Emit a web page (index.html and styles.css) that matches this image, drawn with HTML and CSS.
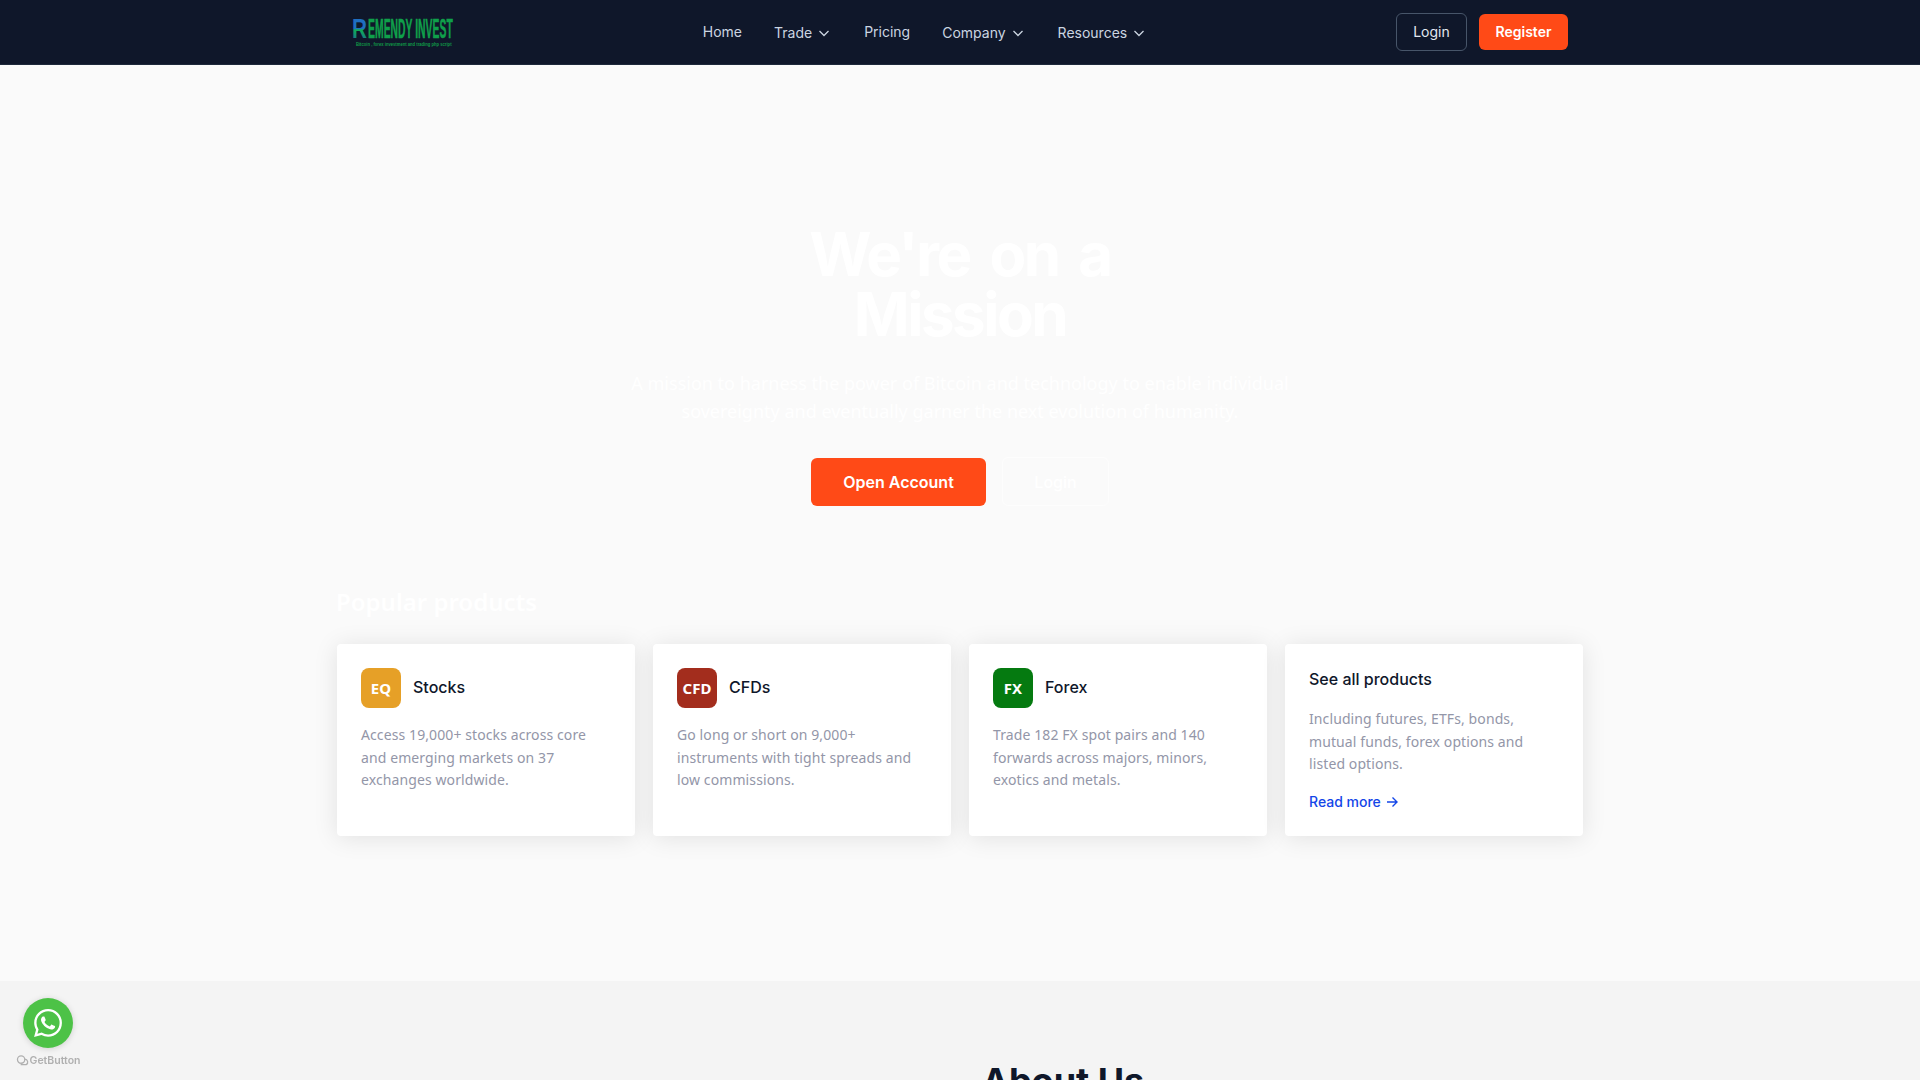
FILE: index.html
```html
<!DOCTYPE html>
<html lang="en">
<head>
<meta charset="UTF-8" />
<meta name="viewport" content="width=device-width, initial-scale=1" />
<title>Remendy Invest</title>
<link rel="stylesheet" href="styles.css">
</head>
<body>
<header class="topbar">
  <div class="wrap topbar-inner">
    <a class="logo" href="#" aria-label="Remendy Invest">
      <svg width="102" height="40" viewBox="0 0 102 40">
        <defs>
          <linearGradient id="logoR" x1="0" y1="0" x2="0" y2="1">
            <stop offset="0" stop-color="#1f6fc0" />
            <stop offset="0.5" stop-color="#1f6fc0" />
            <stop offset="0.55" stop-color="#0fae55" />
            <stop offset="1" stop-color="#1b5f9e" />
          </linearGradient>
        </defs>
        <g transform="scale(0.75 1)">
          <text class="logo-r" x="0" y="26" textLength="20" lengthAdjust="spacingAndGlyphs" fill="url(#logoR)">R</text>
        </g>
        <g transform="scale(0.46 1)">
          <text class="logo-name" x="35" y="26" textLength="184" lengthAdjust="spacingAndGlyphs">EMENDY INVEST</text>
        </g>
        <g transform="scale(0.79 1)">
          <text class="logo-sub" x="5" y="34" textLength="121" lengthAdjust="spacingAndGlyphs">Bitcoin , forex investment and trading php script</text>
        </g>
      </svg>
    </a>
    <nav class="mainnav">
      <a href="#">Home</a>
      <a class="has-menu" href="#">Trade
        <svg viewBox="0 0 16 16"><path d="M3.5 6l4.5 4.5L12.5 6" /></svg>
      </a>
      <a href="#">Pricing</a>
      <a class="has-menu" href="#">Company
        <svg viewBox="0 0 16 16"><path d="M3.5 6l4.5 4.5L12.5 6" /></svg>
      </a>
      <a class="has-menu" href="#">Resources
        <svg viewBox="0 0 16 16"><path d="M3.5 6l4.5 4.5L12.5 6" /></svg>
      </a>
    </nav>
    <div class="topbar-actions">
      <a class="btn-login" href="#">Login</a>
      <a class="btn-register" href="#">Register</a>
    </div>
  </div>
</header>

<main>
  <section class="hero">
    <h1>We're on a<br>Mission</h1>
    <p class="hero-text">A mission to harness the power of Bitcoin and technology to enable individual sovereignty and eventually garner the next evolution of humanity.</p>
    <div class="hero-actions">
      <a class="btn-open" href="#">Open Account</a>
      <a class="btn-ghost" href="#">Login</a>
    </div>
  </section>

  <section class="products wrap">
    <h2>Popular products</h2>
    <div class="product-grid">
      <div class="card">
        <div class="card-head">
          <span class="badge badge-eq">EQ</span>
          <h3>Stocks</h3>
        </div>
        <p>Access 19,000+ stocks across core and emerging markets on 37 exchanges worldwide.</p>
      </div>
      <div class="card">
        <div class="card-head">
          <span class="badge badge-cfd">CFD</span>
          <h3>CFDs</h3>
        </div>
        <p>Go long or short on 9,000+ instruments with tight spreads and low commissions.</p>
      </div>
      <div class="card">
        <div class="card-head">
          <span class="badge badge-fx">FX</span>
          <h3>Forex</h3>
        </div>
        <p>Trade 182 FX spot pairs and 140 forwards across majors, minors, exotics and metals.</p>
      </div>
      <div class="card">
        <h3>See all products</h3>
        <p>Including futures, ETFs, bonds, mutual funds, forex options and listed options.</p>
        <a class="read-more" href="#">Read more
          <svg viewBox="0 0 16 16"><path d="M3 8h10M8.5 3.5L13 8l-4.5 4.5" /></svg>
        </a>
      </div>
    </div>
  </section>

  <section class="about">
    <div class="wrap about-grid">
      <div></div>
      <h2>About Us</h2>
    </div>
  </section>
</main>

<div class="chat-widget">
  <a class="chat-bubble" href="#" aria-label="WhatsApp">
    <svg viewBox="0 0 24 24"><path d="M17.472 14.382c-.297-.149-1.758-.867-2.03-.967-.273-.099-.471-.148-.67.15-.197.297-.767.966-.94 1.164-.173.199-.347.223-.644.075-.297-.15-1.255-.463-2.39-1.475-.883-.788-1.48-1.761-1.653-2.059-.173-.297-.018-.458.13-.606.134-.133.298-.347.446-.52.149-.174.198-.298.298-.497.099-.198.05-.371-.025-.52-.075-.149-.669-1.612-.916-2.207-.242-.579-.487-.5-.669-.51-.173-.008-.371-.01-.57-.01-.198 0-.52.074-.792.372-.272.297-1.04 1.016-1.04 2.479 0 1.462 1.065 2.875 1.213 3.074.149.198 2.096 3.2 5.077 4.487.709.306 1.262.489 1.694.625.712.227 1.36.195 1.871.118.571-.085 1.758-.719 2.006-1.413.248-.694.248-1.289.173-1.413-.074-.124-.272-.198-.57-.347m-5.421 7.403h-.004a9.87 9.87 0 01-5.031-1.378l-.361-.214-3.741.982.998-3.648-.235-.374a9.86 9.86 0 01-1.51-5.26c.001-5.45 4.436-9.884 9.888-9.884 2.64 0 5.122 1.03 6.988 2.898a9.825 9.825 0 012.893 6.994c-.003 5.45-4.437 9.884-9.885 9.884m8.413-18.297A11.815 11.815 0 0012.05 0C5.495 0 .16 5.335.157 11.892c0 2.096.547 4.142 1.588 5.945L.057 24l6.305-1.654a11.882 11.882 0 005.683 1.448h.005c6.554 0 11.89-5.335 11.893-11.893a11.821 11.821 0 00-3.48-8.413z" /></svg>
  </a>
  <div class="chat-credit">
    <svg viewBox="0 0 14 12"><circle cx="5.5" cy="5" r="4" /><path d="M5 10.5h6.5M9.5 4.5a3.2 3.2 0 0 1 1.5 6" /></svg>
    GetButton
  </div>
</div>
</body>
</html>
```

FILE: styles.css
```css
/* Reset */
* {
  box-sizing: border-box;
}
html, body {
  height: 1080px;
  overflow: hidden;
}
body {
  margin: 0;
  font-family: "Noto Sans", sans-serif;
  background: #fafafa;
  color: #0f172a;
}
a {
  text-decoration: none;
}
.wrap {
  width: 1248px;
  margin: 0 auto;
}

/* Top bar */
.topbar {
  height: 65px;
  background: #0f172a;
  border-bottom: 1px solid #1e293b;
  font-family: Inter, sans-serif;
}
.topbar-inner {
  height: 64px;
  padding: 0 16px;
  display: flex;
  align-items: center;
  justify-content: space-between;
}
.logo {
  display: flex;
  width: 102px;
}
.logo-r {
  font-family: "Liberation Sans", sans-serif;
  font-weight: 700;
  font-size: 28px;
}
.logo-name {
  font-family: "Liberation Sans Narrow", "Liberation Sans", sans-serif;
  font-weight: 700;
  font-size: 28px;
  fill: #0fa04b;
  stroke: #0fa04b;
  stroke-width: 0.5;
}
.logo-sub {
  font-family: "Liberation Sans Narrow", "Liberation Sans", sans-serif;
  font-weight: 700;
  font-size: 5.5px;
  fill: #0f9a48;
}
.mainnav {
  display: flex;
  align-items: center;
  gap: 32px;
}
.mainnav a {
  font-size: 14px;
  line-height: 20px;
  color: #cbd5e1;
  display: flex;
  align-items: center;
}
.mainnav .has-menu {
  gap: 4px;
  padding-top: 2px;
}
.mainnav svg {
  width: 16px;
  height: 16px;
  fill: none;
  stroke: #cbd5e1;
  stroke-width: 1.3;
}
.topbar-actions {
  display: flex;
  align-items: center;
  gap: 12px;
}
.btn-login {
  width: 71px;
  height: 38px;
  padding-bottom: 2px;
  border: 1px solid #475569;
  border-radius: 6px;
  color: #e2e8f0;
  font-size: 14px;
  display: flex;
  align-items: center;
  justify-content: center;
}
.btn-register {
  width: 89px;
  height: 36px;
  padding-bottom: 2px;
  border-radius: 6px;
  background: #ff4a17;
  color: #fff;
  font-size: 14px;
  font-weight: 600;
  display: flex;
  align-items: center;
  justify-content: center;
}

/* Hero, its text is white on the pale page */
.hero {
  padding-top: 159px;
  text-align: center;
}
.hero h1 {
  margin: 0;
  font-family: Inter, sans-serif;
  font-size: 60px;
  line-height: 60px;
  font-weight: 700;
  letter-spacing: -2.5px;
  word-spacing: 8px;
  color: #fff;
}
.hero-text {
  width: 672px;
  margin: 25px auto 0;
  font-size: 18px;
  line-height: 28px;
  color: #fff;
}
.hero-actions {
  margin-top: 32px;
  display: flex;
  justify-content: center;
  gap: 16px;
  font-family: Inter, sans-serif;
  font-size: 16px;
}
.btn-open {
  width: 175px;
  height: 48px;
  margin-top: 1px;
  border-radius: 6px;
  background: #ff4a17;
  color: #fff;
  font-weight: 600;
  display: flex;
  align-items: center;
  justify-content: center;
}
.btn-ghost {
  width: 107px;
  height: 49px;
  border: 1px solid rgba(255, 255, 255, 0.6);
  border-radius: 6px;
  color: #fff;
  font-weight: 500;
  display: flex;
  align-items: center;
  justify-content: center;
}

/* Products */
.products {
  margin-top: 80px;
}
.products h2 {
  margin: 0;
  font-size: 24px;
  line-height: 32px;
  font-weight: 600;
  color: #fff;
}
.product-grid {
  margin-top: 25px;
  padding: 1px;
  display: grid;
  grid-template-columns: repeat(4, 1fr);
  gap: 18px;
}
.card {
  height: 192px;
  padding: 24px;
  background: #fff;
  border-radius: 4px;
  box-shadow: 0 2px 24px rgba(0, 0, 0, 0.1);
}
.card-head {
  display: flex;
  align-items: center;
  gap: 12px;
}
.card h3 {
  margin: 0;
  padding-bottom: 2px;
  font-family: Inter, sans-serif;
  font-size: 16px;
  line-height: 22px;
  font-weight: 500;
  color: #0f172a;
}
.card p {
  margin: 16px 0 0;
  font-size: 14px;
  line-height: 22.5px;
  letter-spacing: 0.1px;
  color: #9396a8;
}
.badge {
  width: 40px;
  height: 40px;
  border-radius: 8px;
  color: #fff;
  font-size: 15px;
  font-weight: 700;
  display: flex;
  align-items: center;
  justify-content: center;
}
.badge-eq {
  background: #e6a027;
}
.badge-cfd {
  background: #a32d1d;
}
.badge-fx {
  background: #057a10;
}
.read-more {
  margin-top: 16px;
  font-family: Inter, sans-serif;
  font-size: 14px;
  line-height: 20px;
  font-weight: 500;
  color: #1346e8;
  display: flex;
  align-items: center;
  gap: 3px;
}
.read-more svg {
  width: 16px;
  height: 16px;
  fill: none;
  stroke: #1346e8;
  stroke-width: 1.4;
}

/* About */
.about {
  margin-top: 144px;
  height: 300px;
  background: #f4f4f4;
}
.about-grid {
  display: grid;
  grid-template-columns: 1fr 1fr;
  gap: 16px;
  padding-top: 80px;
}
.about h2 {
  margin: 0 0 0 14px;
  font-family: Inter, sans-serif;
  font-size: 36px;
  line-height: 40px;
  font-weight: 700;
  color: #0f172a;
}

/* Floating chat button */
.chat-widget {
  position: fixed;
  left: 16px;
  top: 998px;
  width: 64px;
  display: flex;
  flex-direction: column;
  align-items: center;
}
.chat-bubble {
  width: 50px;
  height: 50px;
  border-radius: 50%;
  background: #4dc247;
  box-shadow: 0 1px 6px rgba(0, 0, 0, 0.15);
  display: flex;
  align-items: center;
  justify-content: center;
}
.chat-bubble svg {
  width: 28px;
  height: 28px;
  fill: #fff;
}
.chat-credit {
  margin-top: 6px;
  font-family: Inter, sans-serif;
  font-size: 10.5px;
  line-height: 13px;
  font-weight: 600;
  color: #b0b0b0;
  white-space: nowrap;
  display: flex;
  align-items: center;
  gap: 1px;
}
.chat-credit svg {
  width: 13px;
  height: 11px;
  fill: none;
  stroke: #b0b0b0;
  stroke-width: 1.4;
}
```
